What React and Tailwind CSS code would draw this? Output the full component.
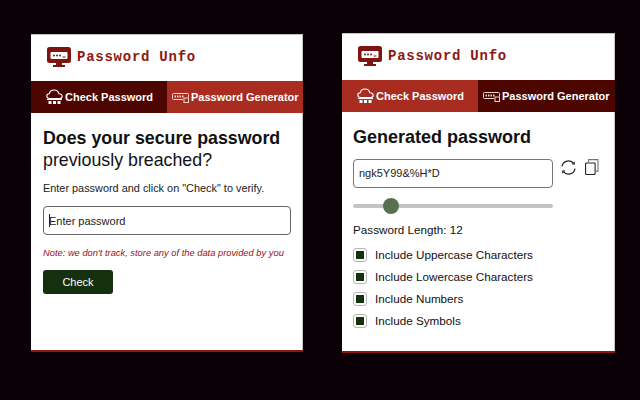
import React from 'react';

const font = { fontFamily: '"Liberation Sans", Arial, sans-serif' };

// Logo: monitor with password dots
const MonitorLogo = () => (
  <svg width="24" height="21" viewBox="0 0 24 21">
    <path d="M2.5 0h19A2.5 2.5 0 0 1 24 2.500v11a2.500 2.500 0 0 1-2.500 2.500H15v2h3v2H6v-2h3v-2H2.500A2.500 2.500 0 0 1 0 13.500v-11A2.500 2.500 0 0 1 2.500 0z" fill="#7e1510" />
    <rect x="3.500" y="5" width="17" height="7" rx="1" fill="#fff" />
    <circle cx="7" cy="8.500" r="1" fill="#7e1510" />
    <circle cx="10" cy="8.500" r="1" fill="#7e1510" />
    <circle cx="13" cy="8.500" r="1" fill="#7e1510" />
    <rect x="15.500" y="9.500" width="3" height="1" fill="#7e1510" />
  </svg>
);

const CloudIcon = () => (
  <svg width="17" height="16" viewBox="0 0 17 16" fill="none" stroke="#fff" strokeWidth="1.100">
    <path d="M3.500 9.500C1.800 9.500 0.800 8.400 0.800 7.100 0.800 5.800 1.800 4.800 3.200 4.800 3.700 2.400 5.800 1 8 1c2.300 0 4.300 1.500 4.900 3.800 1.900-.1 3.300 1 3.300 2.400 0 1.300-1 2.300-2.700 2.300z" />
    <path d="M1 10.500h15" />
    <g fill="#fff" stroke="none">
      <rect x="2.500" y="12" width="3" height="3" />
      <rect x="7" y="12" width="3" height="3" />
      <rect x="11.500" y="12" width="3" height="3" />
    </g>
  </svg>
);

const KeyboardIcon = () => (
  <svg width="17" height="11" viewBox="0 0 17 11" fill="none" stroke="#f1d5d0" strokeWidth="1">
    <path d="M11 7.500H1.500a1 1 0 0 1-1-1v-4a1 1 0 0 1 1-1h14a1 1 0 0 1 1 1v3" />
    <g fill="#f1d5d0" stroke="none">
      <rect x="2.500" y="3.500" width="1.500" height="2" />
      <rect x="5" y="3.500" width="1.500" height="2" />
      <rect x="7.500" y="3.500" width="1.500" height="2" />
      <rect x="10" y="3.500" width="1.500" height="2" />
    </g>
    <rect x="12" y="6" width="4.500" height="4.500" />
  </svg>
);

// Nearly closed circle, two small arrow tips at the gaps
const RefreshIcon = () => (
  <svg width="15" height="15" viewBox="0 0 15 15" fill="none" stroke="#222" strokeWidth="1.200">
    <path d="M1 6.300A6.500 6.500 0 0 1 12.700 3.600" />
    <path d="M14 8.700A6.500 6.500 0 0 1 2.300 11.400" />
    <path d="M13.200 1.800v2.200h-2.200" />
    <path d="M1.800 13.200v-2.200h2.200" />
  </svg>
);

const CopyIcon = () => (
  <svg width="14" height="16" viewBox="0 0 14 16" fill="none" stroke="#222" strokeWidth="1.100">
    <rect x="0.600" y="4" width="9.500" height="11.500" rx="0.800" />
    <path d="M3.500 3V.6h9.500v11.500h-2.500" stroke="#777" />
  </svg>
);

const Header = () => (
  <div className="flex h-[47px] items-center gap-[6px] pb-px pl-[16px]">
    <MonitorLogo />
    <span className="text-[14px] font-bold tracking-[0.750px] text-[#8f1712]" style={{ fontFamily: '"Liberation Mono", monospace' }}>
      Password Unfo
    </span>
  </div>
);

// The active tab is the dark one
const Tabs = ({ active }) => {
  const dark = 'bg-[#4d0500]';
  const light = 'bg-[#a92c20]';
  return (
    <div className="flex h-[32px] whitespace-nowrap text-[11px] font-bold text-white">
      <div className={`flex w-[136px] items-center gap-[2px] pl-[15px] ${active === 'check' ? dark : light}`}>
        <CloudIcon />
        <span>Check Password</span>
      </div>
      <div className={`flex flex-1 items-center gap-[2px] pl-[5px] ${active === 'gen' ? dark : light}`}>
        <KeyboardIcon />
        <span>Password Generator</span>
      </div>
    </div>
  );
};

const Panel = ({ className, children }) => (
  <div className={`flex flex-col border-b-2 border-[#8f1712] bg-white shadow-[inset_0_1px_0_#c4c4c4,inset_-1px_0_0_#c4c4c4] ${className}`}>{children}</div>
);

const CheckRow = ({ label }) => (
  <label className="flex items-center gap-[8px] text-[11.700px] leading-[18px] text-[#111]">
    <span className="flex h-[14px] w-[14px] items-center justify-center rounded-[3px] border border-[#b5b5b5] bg-white">
      <span className="h-[8px] w-[8px] bg-[#14300c]" />
    </span>
    {label}
  </label>
);

const App = () => (
  <div className="flex h-[400px] w-[640px] items-start gap-[39px] overflow-hidden bg-[#0b0006] pl-[31px] pt-[33px]" style={font}>
    <Panel className="mt-[1px] h-[318px] w-[272px]">
      <Header />
      <Tabs active="check" />
      <div className="px-[12px] pt-[14px]">
        <h1 className="text-[17.800px] leading-[22px] text-[#111]">
          <b>Does your secure password</b>
          <br />
          previously breached?
        </h1>
        <p className="mt-[9px] text-[10.900px] text-[#222]">Enter password and click on "Check" to verify.</p>
        <div className="mt-[10px] flex h-[29px] w-[248px] items-center rounded-[4px] border border-[#666] pl-[5px] text-[11px] text-[#222]">
          <span className="mr-[-1px] h-[13px] w-px bg-[#222]" />
          Enter password
        </div>
        <p className="mt-[11px] whitespace-nowrap text-[9.330px] italic leading-[15px] text-[#9c0f0f]">Note: we don't track, store any of the data provided by you</p>
        <button className="mt-[9px] h-[24px] w-[70px] rounded-[3px] bg-[#14300c] text-[11px] text-white">Check</button>
      </div>
    </Panel>

    <Panel className="h-[320px] w-[273px]">
      <Header />
      <Tabs active="gen" />
      <div className="px-[11px] pt-[14px]">
        <h1 className="text-[18px] font-bold leading-[22px] text-[#111]">Generated password</h1>
        <div className="mt-[11px] flex items-start gap-[8px]">
          <div className="flex h-[29px] w-[200px] items-center rounded-[4px] border border-[#777] pl-[5px] text-[11px] text-[#222]">
            ngk5Y99&amp;%H*D
          </div>
          <div className="flex items-center gap-[9px]">
            <RefreshIcon />
            <CopyIcon />
          </div>
        </div>
        <div className="relative mt-[16px] h-[4px] w-[200px] rounded-full bg-[#c4c4c4]">
          <span className="absolute left-[30px] top-[-6px] h-[16px] w-[16px] rounded-full bg-[#58704f]" />
        </div>
        <p className="mt-[13px] text-[11.700px] text-[#111]">Password Length: 12</p>
        <div className="mt-[7px] flex flex-col gap-[4.300px]">
          <CheckRow label="Include Uppercase Characters" />
          <CheckRow label="Include Lowercase Characters" />
          <CheckRow label="Include Numbers" />
          <CheckRow label="Include Symbols" />
        </div>
      </div>
    </Panel>
  </div>
);

export default App;
